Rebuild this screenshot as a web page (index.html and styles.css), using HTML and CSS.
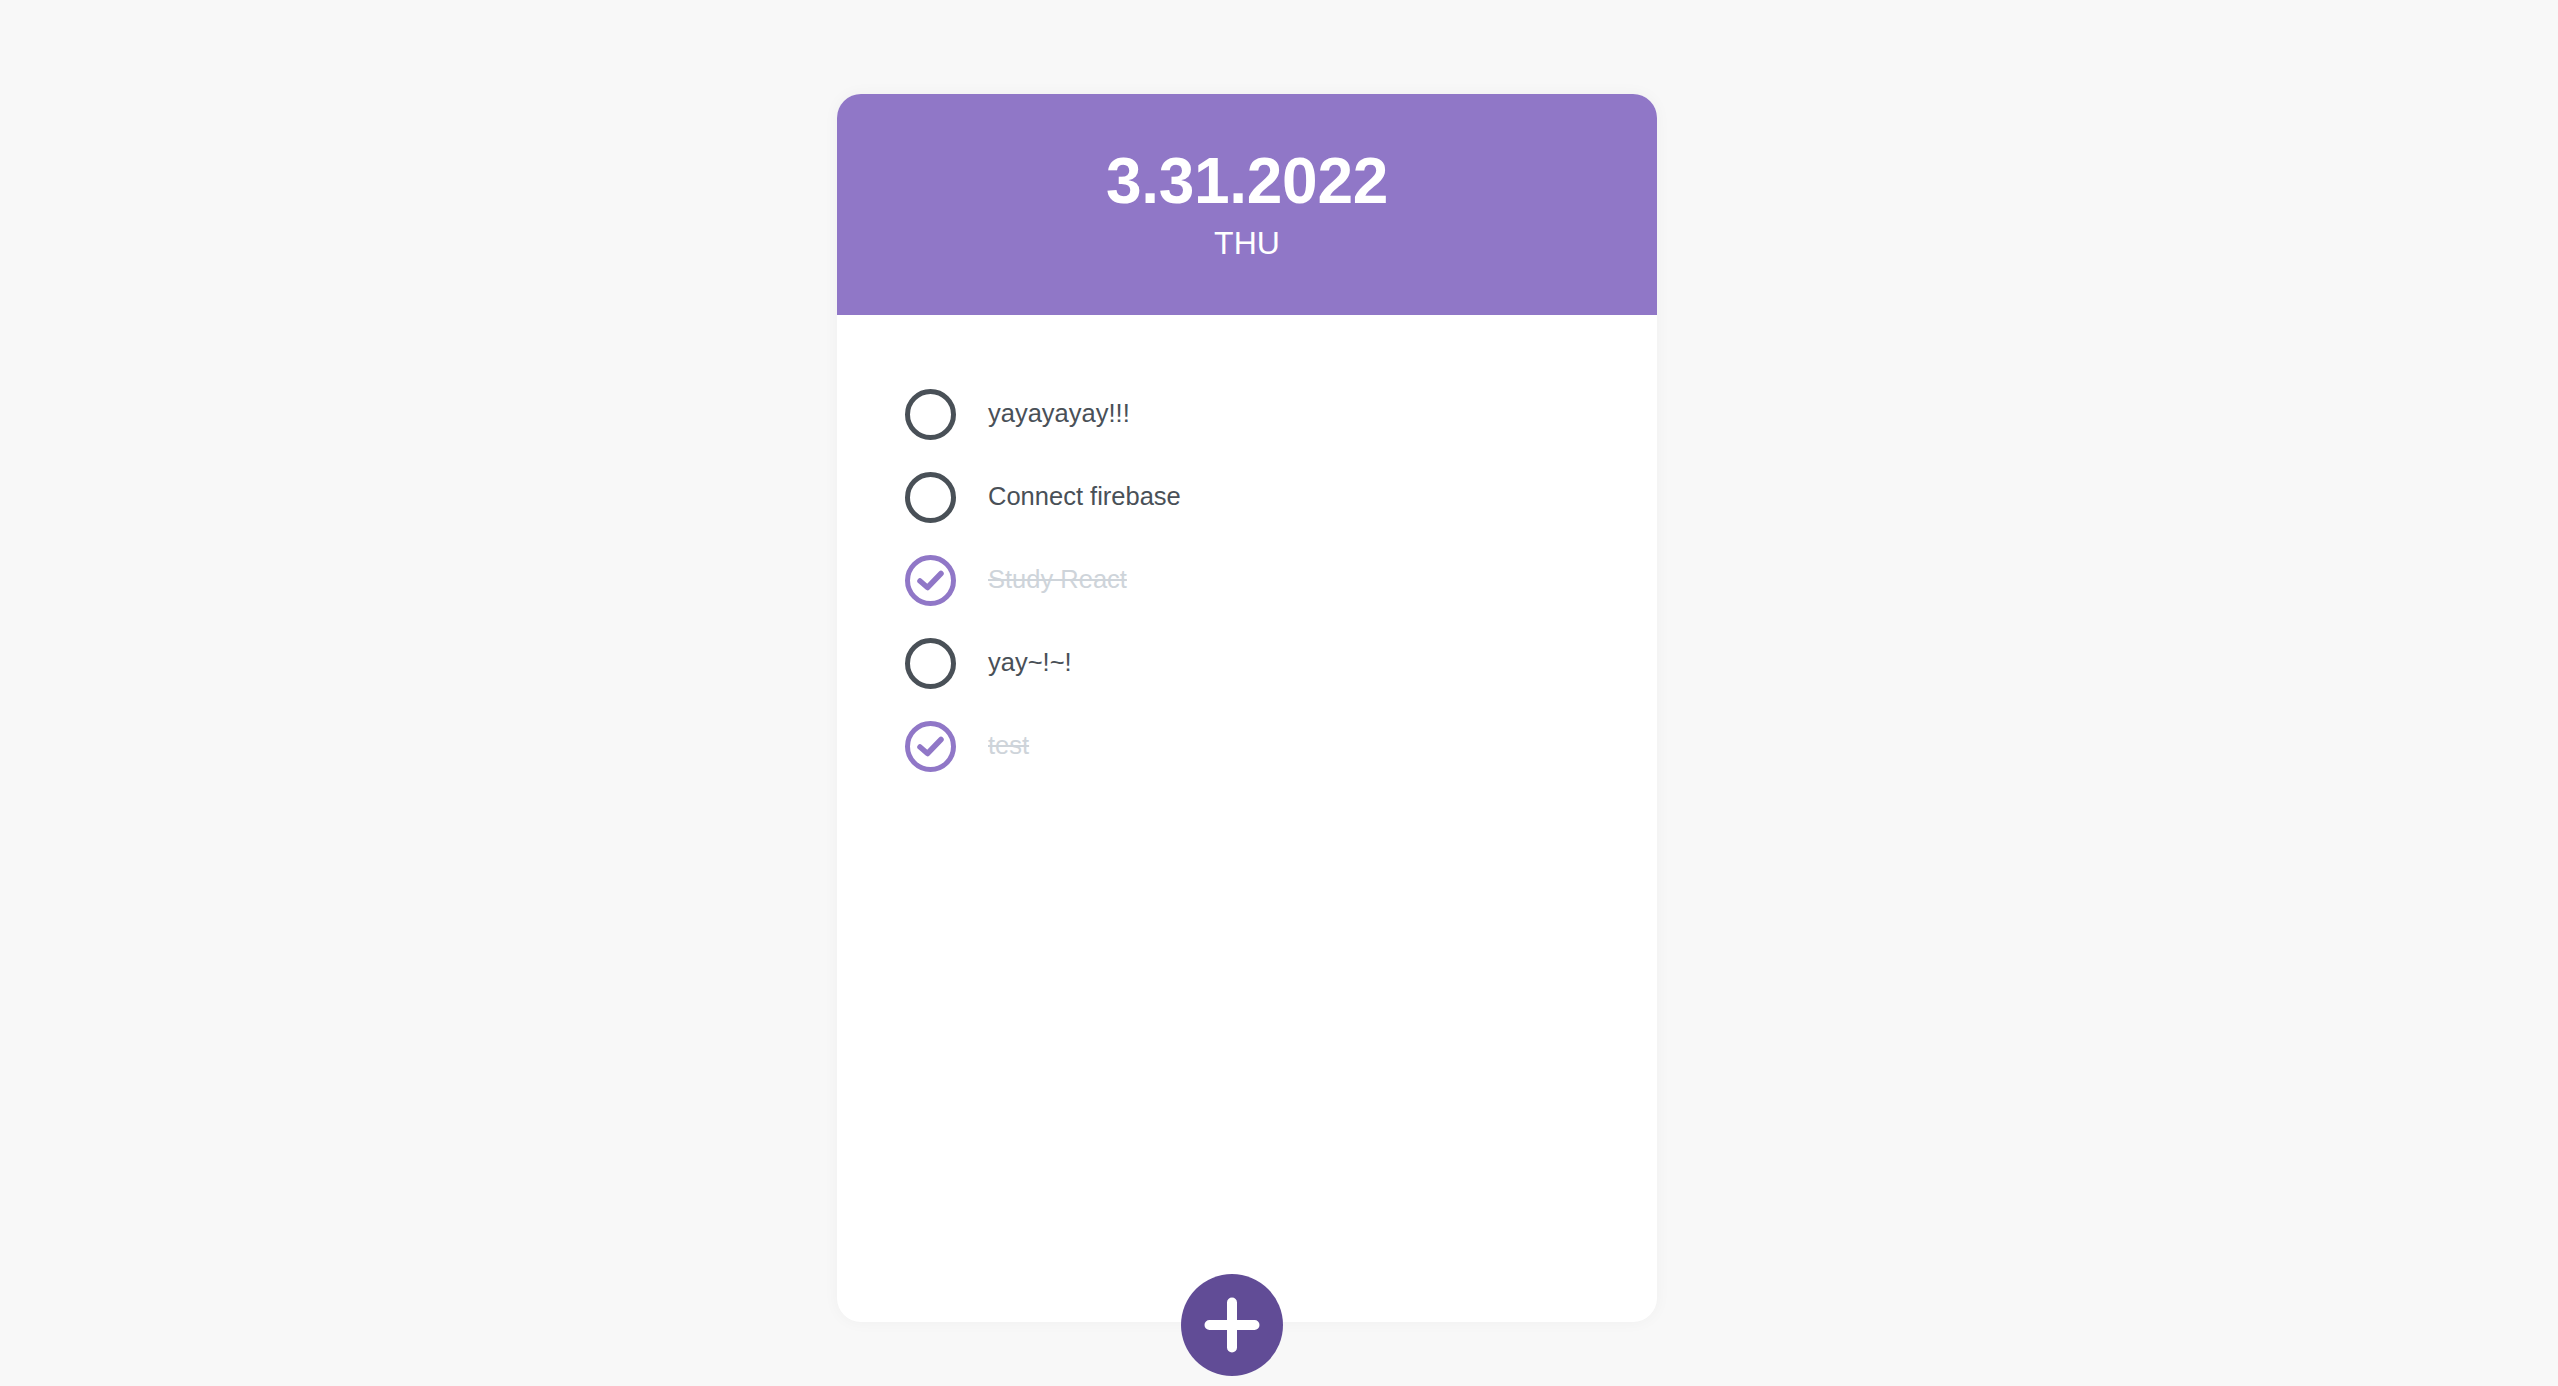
FILE: index.html
```html
<!DOCTYPE html>
<html>
<head>
<meta charset="utf-8">
<link rel="stylesheet" href="styles.css">
</head>
<body>
<div class="page">
  <div class="card">
    <header class="head">
      <div class="date">3.31.2022</div>
      <div class="day">THU</div>
    </header>
    <ul class="list">
      <li class="item">
        <svg class="chk" viewBox="0 0 51 51"><circle cx="25.5" cy="25.5" r="23" /></svg>
        <span class="txt">yayayayay!!!</span>
      </li>
      <li class="item">
        <svg class="chk" viewBox="0 0 51 51"><circle cx="25.5" cy="25.5" r="23" /></svg>
        <span class="txt">Connect firebase</span>
      </li>
      <li class="item done">
        <svg class="chk" viewBox="0 0 51 51"><circle cx="25.5" cy="25.5" r="23" /><path class="tick" d="M15 26 L22.5 32.5 L36 18.5" /></svg>
        <span class="txt">Study React</span>
      </li>
      <li class="item">
        <svg class="chk" viewBox="0 0 51 51"><circle cx="25.5" cy="25.5" r="23" /></svg>
        <span class="txt">yay~!~!</span>
      </li>
      <li class="item done">
        <svg class="chk" viewBox="0 0 51 51"><circle cx="25.5" cy="25.5" r="23" /><path class="tick" d="M15 26 L22.5 32.5 L36 18.5" /></svg>
        <span class="txt">test</span>
      </li>
    </ul>
    <button class="add" aria-label="add">
      <svg viewBox="0 0 102 102"><path d="M51 28.5 V73.5 M28.5 51 H73.5" /></svg>
    </button>
  </div>
</div>
</body>
</html>
```

FILE: styles.css
```css
html, body {
  margin: 0;
  padding: 0;
  background: #f8f8f8;
  font-family: "Liberation Sans", Arial, sans-serif;
  height: 100%;
  overflow: hidden;
}
.page {
  padding: 94px 64px 0 0;
}
.card {
  position: relative;
  width: 820px;
  height: 1228px;
  margin: 0 auto;
  background: #fff;
  border-radius: 24px;
  box-shadow: 0 0 16px rgba(0, 0, 0, 0.04);
}
.head {
  box-sizing: border-box;
  height: 221px;
  padding-top: 50px;
  background: #9077c7;
  border-radius: 24px 24px 0 0;
  color: #fff;
  text-align: center;
}
.date {
  font-size: 64px;
  font-weight: 700;
  line-height: 74px;
  letter-spacing: -0.3px;
}
.day {
  margin-top: 7px;
  font-size: 32px;
  line-height: 37px;
}
.list {
  list-style: none;
  margin: 0;
  padding: 58px 68px 0;
}
.item {
  display: flex;
  align-items: center;
  height: 83px;
}
.chk {
  width: 51px;
  height: 51px;
  flex: none;
  fill: none;
  stroke: #495057;
  stroke-width: 5;
  stroke-linecap: round;
  stroke-linejoin: round;
}
.tick {
  stroke-width: 5.5;
}
.txt {
  margin-left: 32px;
  margin-top: -3px;
  font-size: 25.5px;
  color: #495057;
}
.done .chk {
  stroke: #9077c7;
}
.done .txt {
  color: #ced4da;
  text-decoration: line-through;
}
.add {
  position: absolute;
  left: 344px;
  bottom: -54px;
  width: 102px;
  height: 102px;
  padding: 0;
  border: none;
  border-radius: 50%;
  background: #614c96;
  cursor: pointer;
}
.add svg {
  display: block;
  width: 102px;
  height: 102px;
  fill: none;
  stroke: #fff;
  stroke-width: 10;
  stroke-linecap: round;
}
```
